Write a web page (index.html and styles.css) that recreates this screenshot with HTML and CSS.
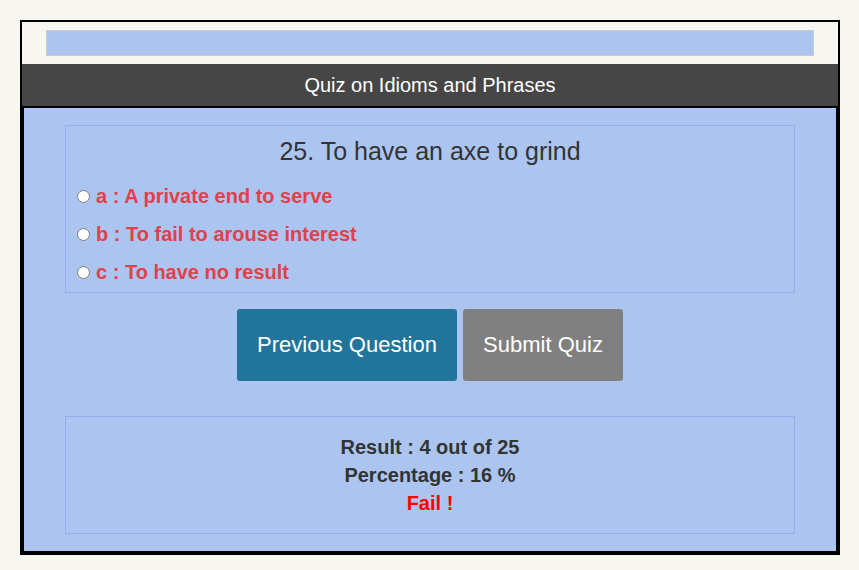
FILE: index.html
```html
<!DOCTYPE html>
<html>
<head>
<meta charset="utf-8">
<title>Quiz on Idioms and Phrases</title>
<link rel="stylesheet" href="styles.css">
</head>
<body>
<div class="quiz">
  <div class="progress-wrap">
    <div class="progress"></div>
  </div>
  <div class="header">Quiz on Idioms and Phrases</div>
  <div class="body">
    <div class="qbox">
      <div class="qtitle">25. To have an axe to grind</div>
      <label class="opt"><input type="radio" name="q25"><span>a : A private end to serve</span></label>
      <label class="opt"><input type="radio" name="q25"><span>b : To fail to arouse interest</span></label>
      <label class="opt"><input type="radio" name="q25"><span>c : To have no result</span></label>
    </div>
    <div class="buttons">
      <button class="btn btn-prev">Previous Question</button>
      <button class="btn btn-submit">Submit Quiz</button>
    </div>
    <div class="result">
      <div>Result : 4 out of 25</div>
      <div>Percentage : 16 %</div>
      <div class="fail">Fail !</div>
    </div>
  </div>
</div>
</body>
</html>
```
FILE: styles.css
```css
html, body {
  margin: 0;
  padding: 0;
  background: #f7f6f1;
  font-family: "Liberation Sans", Arial, sans-serif;
}
body {
  padding: 20px 0 0 20px;
}
.quiz {
  width: 816px;
  border: 2px solid #000;
  background: #f7f6f1;
}
.progress-wrap {
  padding: 8px 24px;
}
.progress {
  height: 24px;
  border: 1px solid #cccccc;
  background: #abc5f0;
}
.header {
  height: 42px;
  background: #464646;
  color: #fff;
  font-size: 20px;
  line-height: 42px;
  text-align: center;
}
.body {
  border: 2px solid #000;
  background: #abc5f0;
  padding: 17px 0;
}
.qbox, .result {
  width: 728px;
  margin: 0 auto;
  border: 1px solid #8fb1ea;
}
.qbox {
  padding: 11px 0 1px 0;
}
.qtitle {
  font-size: 25px;
  line-height: 28px;
  color: #333;
  text-align: center;
  margin-bottom: 12px;
}
.opt {
  display: flex;
  align-items: center;
  height: 38px;
  padding-left: 6px;
  font-size: 20px;
  font-weight: bold;
  color: #e2404a;
}
.opt input {
  margin: 0 6px 0 5px;
  width: 13px;
  height: 13px;
}
.buttons {
  display: flex;
  justify-content: center;
  gap: 6px;
  margin: 16px 0 35px;
}
.btn {
  border: none;
  border-radius: 3px;
  color: #fff;
  font-family: "Liberation Sans", Arial, sans-serif;
  font-size: 22px;
  height: 72px;
  padding: 0 20px;
}
.btn-prev {
  background: #21759b;
  width: 220px;
}
.btn-submit {
  background: #808080;
  width: 160px;
}
.result {
  padding: 16px 0;
  text-align: center;
  font-size: 20px;
  font-weight: bold;
  line-height: 28px;
  color: #333;
}
.fail {
  color: #ff0000;
}
```
